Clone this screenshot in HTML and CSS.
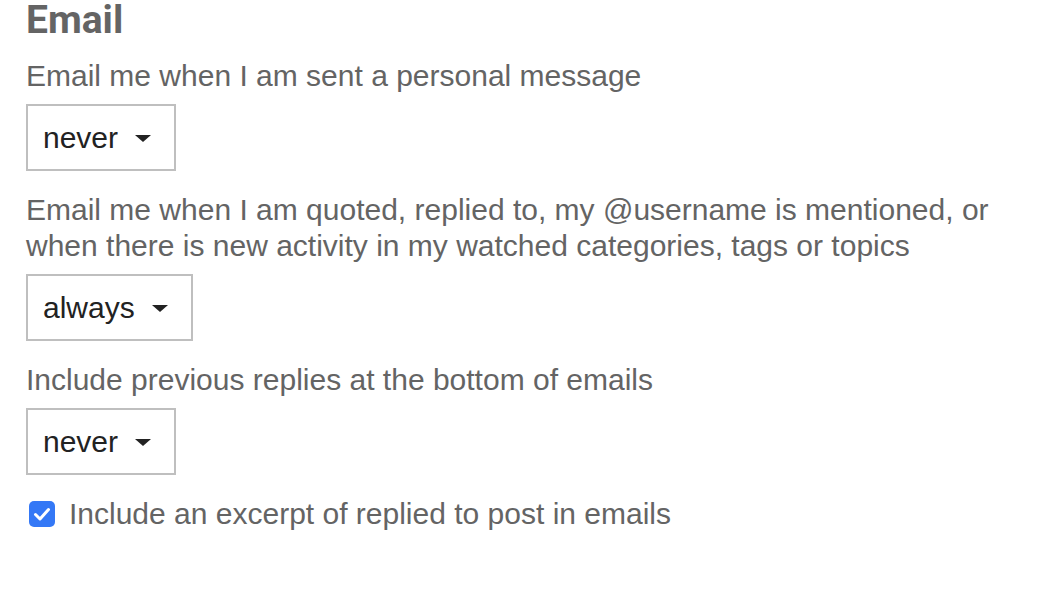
FILE: index.html
```html
<!DOCTYPE html>
<html>
<head>
<meta charset="utf-8">
<link rel="stylesheet" href="styles.css">
</head>
<body>
<div class="prefs">
  <h2 class="title">Email</h2>
  <div class="control">
    <label class="label">Email me when I am sent a personal message</label>
    <div class="select"><span>never</span><span class="caret"></span></div>
  </div>
  <div class="control">
    <label class="label">Email me when I am quoted, replied to, my @username is mentioned, or when there is new activity in my watched categories, tags or topics</label>
    <div class="select"><span>always</span><span class="caret"></span></div>
  </div>
  <div class="control">
    <label class="label">Include previous replies at the bottom of emails</label>
    <div class="select"><span>never</span><span class="caret"></span></div>
  </div>
  <label class="check">
    <span class="box"><svg viewBox="0 0 26 26" width="26" height="26"><path d="M6.5 13.5 L11 18 L19.5 8.5" fill="none" stroke="#fff" stroke-width="3" stroke-linecap="round" stroke-linejoin="round"/></svg></span>
    <span>Include an excerpt of replied to post in emails</span>
  </label>
</div>
</body>
</html>
```
FILE: styles.css
```css
html, body { margin: 0; padding: 0; background: #fff; }
body { font-family: "Liberation Sans", Arial, sans-serif; color: #646464; }
.prefs { padding: 0 0 0 26px; width: 985px; }
.title { font-family: Roboto, "Liberation Sans", sans-serif; font-size: 39px; font-weight: bold; margin: 0 0 18px; line-height: 40px; color: #646464; }
.control { display: flex; flex-direction: column; align-items: flex-start; margin-bottom: 21px; }
.label { font-size: 30px; line-height: 36px; margin-bottom: 10px; }
.select { box-sizing: border-box; height: 67px; border: 2px solid #bfbfbf; display: flex; align-items: center; padding: 0 23px 0 15px; gap: 17px; font-size: 30px; color: #222; }
.caret { width: 0; height: 0; border-left: 8px solid transparent; border-right: 8px solid transparent; border-top: 7px solid #222; margin-top: 2px; }
.check { display: flex; align-items: center; gap: 14px; font-size: 30px; line-height: 36px; margin-left: 3px; }
.box { width: 26px; height: 26px; background: #3478f6; border-radius: 5px; display: flex; }
```
